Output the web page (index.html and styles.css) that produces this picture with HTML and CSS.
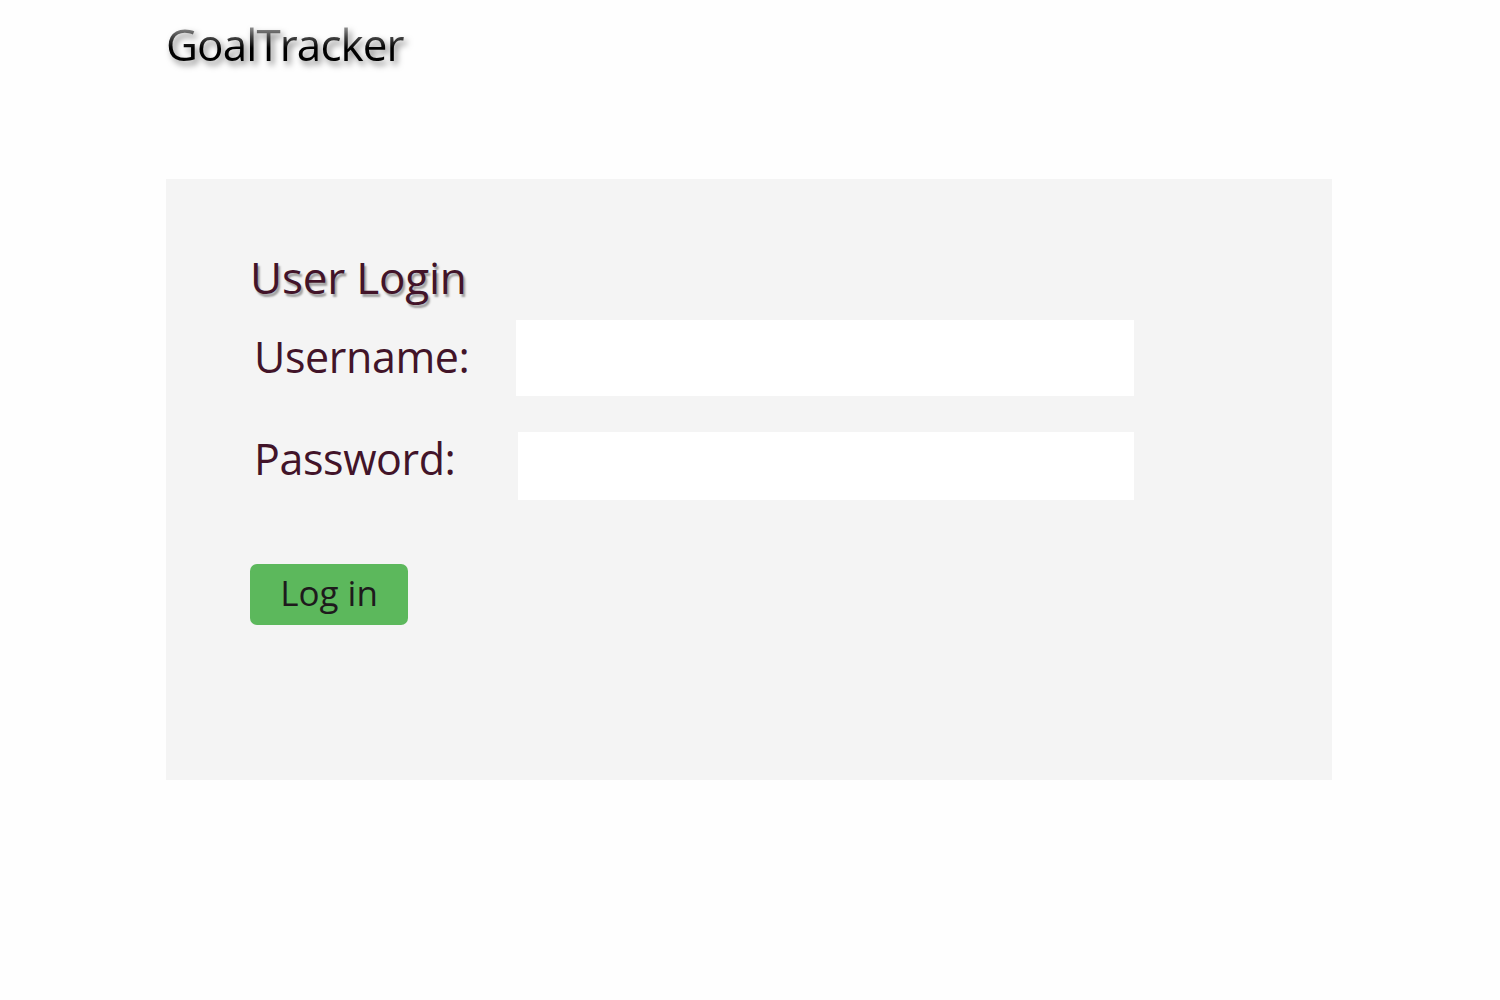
FILE: index.html
```html
<!DOCTYPE html>
<html>
<head>
<meta charset="utf-8">
<link rel="stylesheet" href="styles.css">
</head>
<body>
<div class="page">
  <header class="header">
    <h1 class="brand">GoalTracker</h1>
  </header>
  <main class="panel">
    <h2 class="title">User Login</h2>
    <div class="row row-user">
      <label class="label">Username:</label>
      <input class="field field-user" type="text">
    </div>
    <div class="row row-pass">
      <label class="label">Password:</label>
      <input class="field field-pass" type="password">
    </div>
    <button class="btn">Log in</button>
  </main>
</div>
</body>
</html>
```
FILE: styles.css
```css
html, body {
  margin: 0;
  padding: 0;
  background: #fefefe;
}
body {
  font-family: "Open Sans", "Noto Sans", sans-serif;
}
.page {
  width: 1166px;
  margin-left: 166px;
}
.header {
  height: 179px;
}
.brand {
  margin: 0;
  padding-top: 14px;
  font-size: 44px;
  font-weight: 400;
  letter-spacing: -0.9px;
  line-height: 60px;
  display: inline-block;
  background: linear-gradient(to bottom, #d0d0d0 0%, #d0d0d0 25%, #444 50%, #000 65%, #000 100%);
  -webkit-background-clip: text;
  background-clip: text;
  color: transparent;
  filter: drop-shadow(3px 4px 3px rgba(0,0,0,0.5));
}
.panel {
  background: #f4f4f4;
  height: 601px;
  box-sizing: border-box;
  padding: 68px 0 0 84px;
}
.title {
  margin: 0;
  font-size: 44px;
  font-weight: 400;
  letter-spacing: -0.2px;
  line-height: 60px;
  color: #421429;
  text-shadow: 2px 3px 2px rgba(0,0,0,0.35);
}
.row {
  display: flex;
  align-items: flex-start;
}
.row-user {
  margin-top: 13px;
}
.row-pass {
  margin-top: 36px;
}
.label {
  font-size: 43px;
  line-height: 76px;
  color: #421429;
  letter-spacing: -0.4px;
  padding-left: 4px;
  margin-top: -1px;
}
.field {
  border: none;
  outline: none;
  background: #fff;
  padding: 0;
  margin: 0;
}
.field-user {
  width: 618px;
  height: 76px;
  margin-left: 47px;
}
.field-pass {
  width: 616px;
  height: 68px;
  margin-left: 62px;
}
.row-pass .label {
  line-height: 56px;
}
.btn {
  display: block;
  margin-top: 64px;
  width: 158px;
  height: 61px;
  border: none;
  border-radius: 7px;
  background: #5cb85c;
  color: #1e1a1c;
  font-family: "Open Sans", "Noto Sans", sans-serif;
  font-size: 35px;
  padding: 0 0 4px 0;
}
```
